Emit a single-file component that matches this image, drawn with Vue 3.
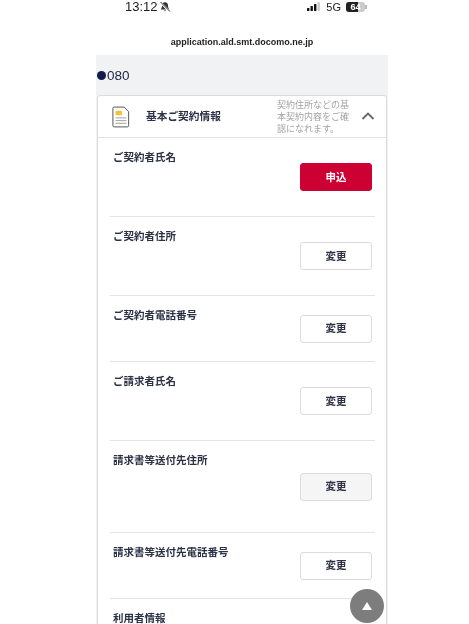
<script setup>
const rows = [
  { label: 'ご契約者氏名', action: '申込', size: 'mid', kind: 'primary' },
  { label: 'ご契約者住所', action: '変更', size: 'mid', kind: '' },
  { label: 'ご契約者電話番号', action: '変更', size: 'low', kind: '' },
  { label: 'ご請求者氏名', action: '変更', size: 'mid', kind: '' },
  { label: '請求書等送付先住所', action: '変更', size: 'high', kind: 'pressed' },
  { label: '請求書等送付先電話番号', action: '変更', size: 'low', kind: '' },
]
</script>

<template>
  <div class="page">
    <div class="status">
      <div class="status-left">
        <span class="time">13:12</span>
        <svg class="bell" viewBox="0 0 12 12" width="12" height="12">
          <path d="M6 1.2c-2 0-3 1.5-3 3.4 0 2-.6 3-1.3 3.8h8.6C9.600 7.600 9 6.600 9 4.600 9 2.700 8 1.200 6 1.200z" fill="#333"/>
          <path d="M4.800 9.400a1.300 1.300 0 0 0 2.400 0z" fill="#333"/>
          <path d="M1.500 1.500l9 9" stroke="#fff" stroke-width="2"/>
          <path d="M1.500 1l9.500 9.500" stroke="#333" stroke-width="1"/>
        </svg>
      </div>
      <div class="status-right">
        <svg viewBox="0 0 14 9" width="14" height="9">
          <rect x="0" y="6" width="2.400" height="3" rx=".5" fill="#111"/>
          <rect x="3.500" y="4" width="2.400" height="5" rx=".5" fill="#111"/>
          <rect x="7" y="2" width="2.400" height="7" rx=".5" fill="#111"/>
          <rect x="10.500" y="0" width="2.400" height="9" rx=".5" fill="#ccc"/>
        </svg>
        <span class="net">5G</span>
        <span class="battery"><span class="battery-fill"></span><span class="battery-text">64</span></span>
        <span class="battery-cap"></span>
      </div>
    </div>
    <div class="url">application.ald.smt.docomo.ne.jp</div>
    <main class="content">
      <div class="number"><span class="dot"></span>080</div>
      <section class="card">
        <header class="card-head">
          <svg class="doc" viewBox="0 0 20 24" width="18" height="22">
            <path d="M2.500 1h11l5 5v15.500a1.500 1.500 0 0 1-1.500 1.500H2.500A1.500 1.500 0 0 1 1 21.500v-19A1.500 1.500 0 0 1 2.500 1z" fill="#fff" stroke="#555" stroke-width="1.100"/>
            <rect x="4" y="5" width="7" height="5" rx="1" fill="#f2c230"/>
            <path d="M4 13h12M4 16h12M4 19h12" stroke="#999" stroke-width="1"/>
          </svg>
          <span class="head-title">基本ご契約情報</span>
          <span class="head-note">契約住所などの基本契約内容をご確認になれます。</span>
          <svg class="chev" viewBox="0 0 14 8" width="14" height="8">
            <path d="M1.500 7L7 1.500 12.500 7" fill="none" stroke="#666" stroke-width="1.800"/>
          </svg>
        </header>
        <div class="rows">
          <div v-for="row in rows" :key="row.label" class="row" :class="row.size">
            <span class="label">{{ row.label }}</span>
            <button class="btn" :class="row.kind">{{ row.action }}</button>
          </div>
          <div class="row last"><span class="label">利用者情報</span></div>
        </div>
      </section>
    </main>
    <div class="top-btn"><span class="tri"></span></div>
  </div>
</template>

<style>
html, body { margin: 0; background: #fff; overflow: hidden; }
</style>

<style scoped>
.page { position: relative; width: 469px; height: 624px; overflow: hidden; background: #fff; font-family: "Liberation Sans", "Noto Sans CJK JP", sans-serif; color: #1c2340; filter: blur(0.35px); }
.status { height: 13px; display: flex; justify-content: space-between; align-items: center; padding: 0 102.500px 0 125px; }
.status-left { display: flex; align-items: center; gap: 1px; }
.time { font-size: 13px; font-weight: 500; color: #222; }
.status-right { display: flex; align-items: center; gap: 5px; }
.net { font-size: 11px; color: #222; }
.battery { position: relative; width: 19px; height: 10px; border-radius: 3px; background: #ccc; overflow: hidden; display: block; }
.battery-fill { position: absolute; left: 0; top: 0; bottom: 0; width: 64%; background: #222; }
.battery-text { position: absolute; inset: 0; color: #fff; font-size: 9px; font-weight: 700; line-height: 10px; text-align: center; }
.battery-cap { width: 1.500px; height: 4px; background: #bbb; margin-left: -5px; }
.url { margin-top: 22px; height: 20px; line-height: 14px; text-align: center; font-size: 9px; font-weight: 700; color: #222; padding-left: 15px; }
.content { width: 292px; margin-left: 96px; background: #f1f2f4; }
.number { height: 40px; display: flex; align-items: center; gap: 1px; font-size: 13.500px; color: #1c2340; padding-left: 1px; }
.dot { width: 9px; height: 9px; border-radius: 50%; background: #141a4a; }
.card { margin: 0 1px; background: #fff; border: 1px solid #dcdcdc; border-radius: 3px; }
.card-head { height: 41px; display: flex; align-items: center; border-bottom: 1px solid #e2e2e2; padding-left: 14px; }
.doc { flex: none; }
.head-title { width: 131px; margin-left: 16px; padding-bottom: 2px; font-size: 10.700px; font-weight: 700; color: #2c3146; flex: none; }
.head-note { width: 77px; font-size: 9px; line-height: 12px; color: #a3a3a3; flex: none; word-break: break-all; }
.chev { margin-left: 7px; margin-bottom: 2px; flex: none; }
.rows { padding: 0 11px 0 12px; }
.row { display: flex; justify-content: flex-end; align-items: center; position: relative; border-bottom: 1px solid #e4e4e4; padding-right: 3px; box-sizing: border-box; }
.row.mid { height: 79px; }
.row.low { height: 66px; }
.row.high { height: 92px; }
.row.last { height: 60px; border-bottom: 0; }
.label { position: absolute; left: 3px; top: 12px; font-size: 10.500px; font-weight: 700; line-height: 14px; color: #2c3146; }
.btn { width: 72px; height: 28px; padding: 0 0 2px; box-sizing: border-box; border: 1px solid #dcdcdc; border-radius: 3px; background: #fff; font-family: inherit; font-size: 10.500px; font-weight: 700; color: #2c3146; }
.btn.primary { background: #cc0033; border-color: #cc0033; color: #fff; }
.btn.pressed { background: #f5f5f5; }
.top-btn { position: absolute; left: 350px; top: 589px; width: 34px; height: 34px; border-radius: 50%; background: #7d7d7d; display: flex; align-items: center; justify-content: center; }
.tri { width: 0; height: 0; border-left: 5px solid transparent; border-right: 5px solid transparent; border-bottom: 8px solid #fff; }
</style>
